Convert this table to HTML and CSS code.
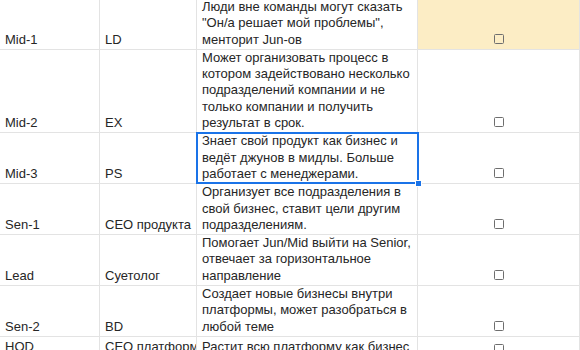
FILE: index.html
```html
<!DOCTYPE html>
<html lang="ru">
<head>
  <meta charset="UTF-8" />
  <title>Грейды</title>
  <link rel="stylesheet" href="styles.css">
</head>
<body>

  <div class="sheet">
    <!-- Mid-1 -->
    <div class="cell"><span>Mid-1</span></div>
    <div class="cell"><span>LD</span></div>
    <div class="cell"><span>Люди вне команды могут сказать<br>"Он/а решает мой проблемы",<br>менторит Jun-ов</span></div>
    <div class="cell check highlight"><span class="box"></span></div>

    <!-- Mid-2 -->
    <div class="cell"><span>Mid-2</span></div>
    <div class="cell"><span>EX</span></div>
    <div class="cell"><span>Может организовать процесс в<br>котором задействовано несколько<br>подразделений компании и не<br>только компании и получить<br>результат в срок.</span></div>
    <div class="cell check"><span class="box"></span></div>

    <!-- Mid-3 -->
    <div class="cell"><span>Mid-3</span></div>
    <div class="cell"><span>PS</span></div>
    <div class="cell selected"><span>Знает свой продукт как бизнес и<br>ведёт джунов в мидлы. Больше<br>работает с менеджерами.</span><span class="handle"></span></div>
    <div class="cell check"><span class="box"></span></div>

    <!-- Sen-1 -->
    <div class="cell"><span>Sen-1</span></div>
    <div class="cell"><span>CEO продукта</span></div>
    <div class="cell"><span>Организует все подразделения в<br>свой бизнес, ставит цели другим<br>подразделениям.</span></div>
    <div class="cell check"><span class="box"></span></div>

    <!-- Lead -->
    <div class="cell"><span>Lead</span></div>
    <div class="cell"><span>Суетолог</span></div>
    <div class="cell"><span>Помогает Jun/Mid выйти на Senior,<br>отвечает за горизонтальное<br>направление</span></div>
    <div class="cell check"><span class="box"></span></div>

    <!-- Sen-2 -->
    <div class="cell"><span>Sen-2</span></div>
    <div class="cell"><span>BD</span></div>
    <div class="cell"><span>Создает новые бизнесы внутри<br>платформы, может разобраться в<br>любой теме</span></div>
    <div class="cell check"><span class="box"></span></div>

    <!-- HOD -->
    <div class="cell last"><span>HOD</span></div>
    <div class="cell last"><span>CEO платформы</span></div>
    <div class="cell last"><span>Растит всю платформу как бизнес</span></div>
    <div class="cell check last"><span class="box"></span></div>
  </div>

</body>
</html>
```

FILE: styles.css
```css
* {
  margin: 0;
  padding: 0;
  box-sizing: border-box;
}

body {
  background-color: #fff;
  font-family: "Liberation Sans", Arial, sans-serif;
  font-size: 13px;
  color: #262626;
  overflow: hidden;
}

.sheet {
  display: grid;
  grid-template-columns: 100px 97px 221px 162px;
  margin-top: -1px;
}

.cell {
  display: flex;
  align-items: flex-end;
  padding: 0 4px 1px 5px;
  line-height: 16.3px;
  border-right: 1px solid #e3e3e3;
  border-bottom: 1px solid #e3e3e3;
  position: relative;
  white-space: nowrap;
}

.cell.check {
  justify-content: center;
  padding-bottom: 5px;
}

.cell.highlight {
  background-color: #fcedc5;
}

.box {
  display: block;
  width: 10px;
  height: 10px;
  border: 1.5px solid #6e6e6e;
  border-radius: 1.5px;
}

.cell.last {
  align-items: flex-start;
  padding-top: 2px;
  height: 20px;
  overflow: hidden;
}

.cell.check.last {
  padding-top: 7px;
}

.selected::after {
  content: "";
  position: absolute;
  left: -1px;
  top: -1px;
  right: -2px;
  bottom: -1px;
  border: 2px solid #1a73e8;
  pointer-events: none;
}

.handle {
  position: absolute;
  right: -5px;
  bottom: -4px;
  width: 7px;
  height: 7px;
  background-color: #1a73e8;
  border: 1px solid #fff;
  z-index: 2;
}
```
